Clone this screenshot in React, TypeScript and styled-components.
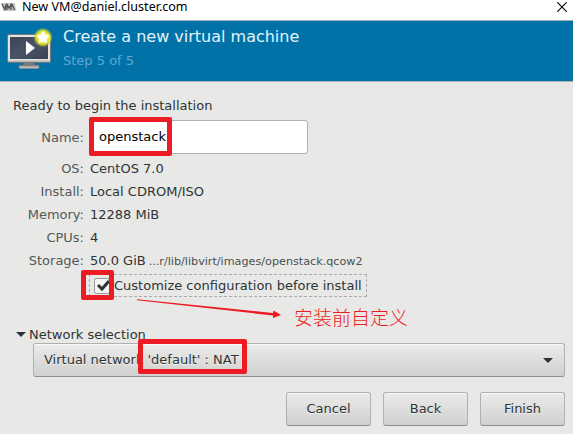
import React from "react";
import styled, { createGlobalStyle } from "styled-components";

const GlobalStyle = createGlobalStyle`
  html, body { margin: 0; padding: 0; overflow: hidden; }
  *, *::before, *::after { box-sizing: border-box; }
`;

const RED = "#ed1c24";

const Window = styled.div`
  position: relative;
  display: flex;
  flex-direction: column;
  width: 573px;
  height: 434px;
  overflow: hidden;
  background: #e8e8e6;
  color: #2e3436;
  font-family: "DejaVu Sans", sans-serif;
  font-size: 13px;
  white-space: nowrap;
`;

const TitleBar = styled.div`
  display: flex;
  flex: none;
  height: 20px;
  background: #fff;
`;

const VmIcon = styled.svg`
  flex: none;
  width: 15px;
  height: 8px;
  margin: 3px 0 0 1px;
`;

const WindowTitle = styled.div`
  margin-left: 6px;
  font: 12.55px/14px "Noto Sans", sans-serif;
  color: #000;
`;

const CloseIcon = styled.svg`
  width: 10px;
  height: 10px;
  margin: 2px 6px 0 auto;
`;

const Banner = styled.header`
  display: flex;
  flex: none;
  height: 62px;
  border-top: 1px solid #a9aeae;
  border-bottom: 1px solid #a9b4b7;
  background: #0072a8;
`;

const MonitorIcon = styled.svg`
  flex: none;
  width: 48px;
  height: 48px;
  margin: 4px 0 0 5px;
`;

const BannerText = styled.div`
  padding: 6px 0 0 10px;
`;

const Heading = styled.div`
  font-size: 16px;
  line-height: 20px;
  color: #e0f2fa;
`;

const Step = styled.div`
  margin-top: 5px;
  line-height: 18px;
  color: #5fa8d1;
`;

const Body = styled.main`
  flex: none;
  padding: 15px 8px 0 13px;
`;

const Intro = styled.div`
  height: 18px;
  line-height: 18px;
`;

const Form = styled.div`
  display: grid;
  grid-template-columns: 71px 1fr;
  column-gap: 6px;
  grid-template-rows: 34px 3px;
  grid-auto-rows: 23px;
  margin-top: 5px;
  align-items: center;
`;

const Label = styled.div`
  justify-self: end;
  color: #555956;
`;

const Value = styled.div`
  display: flex;
  align-items: baseline;
`;

const Path = styled.span`
  margin-left: 3px;
  font-size: 11.2px;
  color: #4b5051;
`;

const NameInput = styled.div`
  display: flex;
  align-items: center;
  width: 218px;
  height: 34px;
  padding: 0 0 1px 8px;
  border: 1px solid #b0b1b0;
  border-radius: 3px;
  background: #fff;
  color: #000;
`;

const FormGap = styled.div`
  grid-column: 1 / -1;
  height: 3px;
`;

const CheckRow = styled.div`
  display: flex;
  align-items: center;
  width: 278px;
  height: 23px;
  margin: 2px 0 0 76px;
  padding-left: 4px;
  border: 1px dashed #aaa;
`;

const CheckBox = styled.svg`
  flex: none;
  width: 16px;
  height: 16px;
  margin-right: 4px;
`;

const Expander = styled.div`
  display: flex;
  align-items: center;
  height: 18px;
  margin-top: 28px;
  padding-left: 3px;
`;

const Triangle = styled.svg`
  flex: none;
  width: 10px;
  height: 5px;
`;

const ExpanderLabel = styled.span`
  margin-left: 3px;
`;

const Raised = styled.div`
  display: flex;
  align-items: center;
  height: 34px;
  border: 1px solid #b0b1af;
  border-bottom-color: #8e8f8d;
  border-radius: 3px;
  background: linear-gradient(#ebebea, #d0d0ce);
  box-shadow: inset 0 1px #fafafa;
  text-shadow: 0 1px #f3f3f2;
`;

const Combo = styled(Raised)`
  justify-content: space-between;
  margin-left: 20px;
  padding: 0 11px 0 10px;
`;

const ComboText = styled.span`
  padding-bottom: 2px;
`;

const Actions = styled.div`
  display: flex;
  justify-content: flex-end;
  gap: 12px;
  margin-top: 15px;
`;

const Button = styled(Raised)`
  justify-content: center;
  width: 85px;
  padding-bottom: 2px;
`;

const Marker = styled.div<{ $x: number; $y: number; $w: number; $h: number }>`
  position: absolute;
  left: ${(p) => p.$x}px;
  top: ${(p) => p.$y}px;
  width: ${(p) => p.$w}px;
  height: ${(p) => p.$h}px;
  border: 5px solid ${RED};
  border-radius: 2px;
`;

const Arrow = styled.svg`
  position: absolute;
  left: 136px;
  top: 298px;
  width: 146px;
  height: 22px;
`;

const Note = styled.div`
  position: absolute;
  left: 294px;
  top: 305px;
  font: 300 19px/24px "Noto Sans CJK SC", sans-serif;
  color: ${RED};
`;

const Down = () => (
  <Triangle viewBox="0 0 10 5">
    <path d="M0 0H10L5 5Z" fill="#2e3436" />
  </Triangle>
);

const details: [string, string, string?][] = [
  ["OS:", "CentOS 7.0"],
  ["Install:", "Local CDROM/ISO"],
  ["Memory:", "12288 MiB"],
  ["CPUs:", "4"],
  ["Storage:", "50.0 GiB", "...r/lib/libvirt/images/openstack.qcow2"],
];

export default function App() {
  return (
    <>
      <GlobalStyle />
      <Window>
        <TitleBar>
          <VmIcon viewBox="0 0 15 8">
            <path d="M0 0H14L15 8H2Z" fill="#c9c9c9" />
            <path d="M1 1L4 6.5L5 1.5M6 7V1.5L8 5L10 1.5V7M11 1L13.5 7" fill="none" stroke="#555" strokeWidth="1.4" />
          </VmIcon>
          <WindowTitle>New VM@daniel.cluster.com</WindowTitle>
          <CloseIcon viewBox="0 0 10 10">
            <path d="M0.3 0.3L9.7 9.7M9.7 0.3L0.3 9.7" stroke="#000" strokeWidth="1.1" />
          </CloseIcon>
        </TitleBar>
        <Banner>
          <MonitorIcon viewBox="5 25 48 48">
            <defs>
              <radialGradient id="glow">
                <stop offset="0.45" stopColor="#fff45a" />
                <stop offset="0.75" stopColor="#d9e021" stopOpacity="0.85" />
                <stop offset="1" stopColor="#9ac43c" stopOpacity="0" />
              </radialGradient>
              <linearGradient id="screen" x1="0" y1="0" x2="1" y2="1">
                <stop offset="0" stopColor="#3c4657" />
                <stop offset="0.5" stopColor="#4a5365" />
                <stop offset="1" stopColor="#394354" />
              </linearGradient>
              <linearGradient id="stand" x1="0" y1="0" x2="0" y2="1">
                <stop offset="0" stopColor="#777" />
                <stop offset="1" stopColor="#ddd" />
              </linearGradient>
            </defs>
            <path d="M24 62H34L35 66H23Z" fill="#777b7d" />
            <rect x="19" y="65" width="20" height="3.5" rx="1" fill="url(#stand)" stroke="#777" strokeWidth="0.5" />
            <rect x="7.5" y="34.5" width="43" height="28" rx="1.5" fill="#e4e4e2" stroke="#777" />
            <path d="M8.5 60.5H49.5V62H8.5Z" fill="#b4b5b5" />
            <rect x="10" y="37" width="38" height="22" fill="url(#screen)" />
            <path d="M26 41L35 48L26 55Z" fill="#fff" />
            <circle cx="43" cy="37.5" r="9.8" fill="url(#glow)" />
            <path d="M43 31L45 35L49 35.7L46.2 38.7L46.8 43L43 41L39.2 43L39.8 38.7L37 35.7L41 35Z" fill="#fff" stroke="#fff" strokeWidth="0.6" strokeLinejoin="round" />
          </MonitorIcon>
          <BannerText>
            <Heading>Create a new virtual machine</Heading>
            <Step>Step 5 of 5</Step>
          </BannerText>
        </Banner>
        <Body>
          <Intro>Ready to begin the installation</Intro>
          <Form>
            <Label>Name:</Label>
            <NameInput>openstack</NameInput>
            <FormGap />
            {details.map(([label, value, path]) => (
              <React.Fragment key={label}>
                <Label>{label}</Label>
                <Value>
                  {value}
                  {path && <Path>{path}</Path>}
                </Value>
              </React.Fragment>
            ))}
          </Form>
          <CheckRow>
            <CheckBox viewBox="0 0 16 16">
              <rect x="0.5" y="0.5" width="15" height="15" rx="2" fill="#f5f5f4" stroke="#999" />
              <path d="M4 7L8 11L15 3" fill="none" stroke="#2e3436" strokeWidth="3" />
            </CheckBox>
            Customize configuration before install
          </CheckRow>
          <Expander>
            <Down />
            <ExpanderLabel>Network selection</ExpanderLabel>
          </Expander>
          <Combo>
            <ComboText>Virtual network 'default' : NAT</ComboText>
            <Down />
          </Combo>
          <Actions>
            <Button>Cancel</Button>
            <Button>Back</Button>
            <Button>Finish</Button>
          </Actions>
        </Body>
        <Marker $x={89} $y={117} $w={83} $h={39} />
        <Marker $x={81} $y={270} $w={33} $h={30} />
        <Marker $x={138} $y={339} $w={109} $h={35} />
        <Arrow viewBox="136 298 146 22">
          <path d="M137 299.3L273 313L273.5 310.5L281 315L273 318L273 315.5L137 300.3Z" fill={RED} />
        </Arrow>
        <Note>安装前自定义</Note>
      </Window>
    </>
  );
}
